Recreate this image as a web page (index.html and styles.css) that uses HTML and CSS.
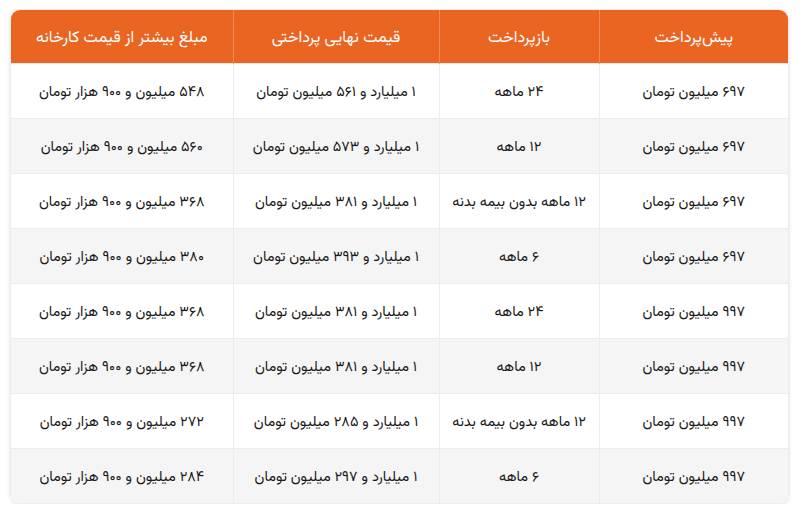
FILE: index.html
```html
<!DOCTYPE html>
<html lang="fa" dir="rtl">
<head>
<meta charset="utf-8">
<link rel="stylesheet" href="styles.css">
</head>
<body>
<div class="wrap">
<table class="tbl">
<colgroup><col class="c1"><col class="c2"><col class="c3"><col class="c4"></colgroup>
<thead>
<tr><th>پیش‌پرداخت</th><th>بازپرداخت</th><th>قیمت نهایی پرداختی</th><th>مبلغ بیشتر از قیمت کارخانه</th></tr>
</thead>
<tbody>
<tr><td>۶۹۷ میلیون تومان</td><td>۲۴ ماهه</td><td>۱ میلیارد و ۵۶۱ میلیون تومان</td><td>۵۴۸ میلیون و ۹۰۰ هزار تومان</td></tr>
<tr><td>۶۹۷ میلیون تومان</td><td>۱۲ ماهه</td><td>۱ میلیارد و ۵۷۳ میلیون تومان</td><td>۵۶۰ میلیون و ۹۰۰ هزار تومان</td></tr>
<tr><td>۶۹۷ میلیون تومان</td><td>۱۲ ماهه بدون بیمه بدنه</td><td>۱ میلیارد و ۳۸۱ میلیون تومان</td><td>۳۶۸ میلیون و ۹۰۰ هزار تومان</td></tr>
<tr><td>۶۹۷ میلیون تومان</td><td>۶ ماهه</td><td>۱ میلیارد و ۳۹۳ میلیون تومان</td><td>۳۸۰ میلیون و ۹۰۰ هزار تومان</td></tr>
<tr><td>۹۹۷ میلیون تومان</td><td>۲۴ ماهه</td><td>۱ میلیارد و ۳۸۱ میلیون تومان</td><td>۳۶۸ میلیون و ۹۰۰ هزار تومان</td></tr>
<tr><td>۹۹۷ میلیون تومان</td><td>۱۲ ماهه</td><td>۱ میلیارد و ۳۸۱ میلیون تومان</td><td>۳۶۸ میلیون و ۹۰۰ هزار تومان</td></tr>
<tr><td>۹۹۷ میلیون تومان</td><td>۱۲ ماهه بدون بیمه بدنه</td><td>۱ میلیارد و ۲۸۵ میلیون تومان</td><td>۲۷۲ میلیون و ۹۰۰ هزار تومان</td></tr>
<tr><td>۹۹۷ میلیون تومان</td><td>۶ ماهه</td><td>۱ میلیارد و ۲۹۷ میلیون تومان</td><td>۲۸۴ میلیون و ۹۰۰ هزار تومان</td></tr>
</tbody>
</table>
</div>
</body>
</html>
```
FILE: styles.css
```css
html, body {
  margin: 0;
  background: #ffffff;
}
body {
  padding: 9px 11px 0 10px;
  font-family: "Vazirmatn", "Noto Sans Arabic", "DejaVu Sans", sans-serif;
  color: #1a1a1a;
}
.wrap {
  width: 779px;
  border-radius: 10px;
  overflow: hidden;
  box-shadow: 0 1px 4px rgba(0,0,0,0.12);
  border: 1px solid #ececec;
  box-sizing: border-box;
}
.tbl {
  width: 100%;
  border-collapse: collapse;
  table-layout: fixed;
}
.c1 { width: 189px; }
.c2 { width: 160px; }
.c3 { width: 206px; }
.c4 { width: 222px; }
th {
  background: #ea6422;
  color: #ffffff;
  font-weight: normal;
  font-size: 16px;
  height: 50px;
  padding: 3px 0 0;
  text-align: center;
  border-left: 1px solid #f08a56;
}
th:last-child, td:last-child { border-left: none; }
td {
  height: 51px;
  padding: 3px 0 0;
  text-align: center;
  font-size: 14.5px;
  border-left: 1px solid #ececec;
  border-top: 1px solid #ececec;
}
tbody tr:nth-child(odd) td { background: #ffffff; }
tbody tr:nth-child(even) td { background: #f5f5f5; }
```
